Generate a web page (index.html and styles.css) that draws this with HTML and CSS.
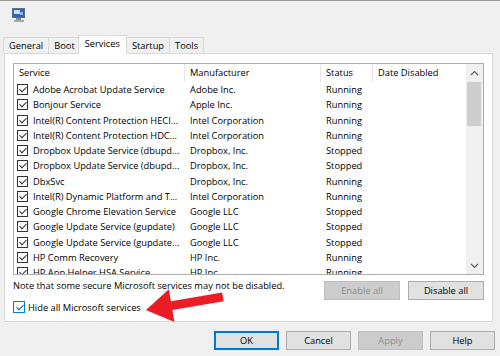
FILE: index.html
```html
<!DOCTYPE html>
<html lang="en">
<head>
    <meta charset="UTF-8">
    <title>System Configuration</title>
    <link rel="stylesheet" href="styles.css">
</head>
<body>
    <div class="window">
        <div class="titlebar">
            <svg class="app-icon" width="14" height="14" viewBox="0 0 14 14">
                <rect x="0.5" y="0.5" width="12" height="9" fill="#2f62b8" stroke="#5a6f8e"/>
                <rect x="2" y="2" width="6" height="4" fill="#bfe0ff"/>
                <rect x="8" y="4" width="3" height="3" fill="#7fb7ee"/>
                <rect x="4" y="10" width="5" height="2" fill="#8c8c8c"/>
                <rect x="2" y="12" width="10" height="2" fill="#a6a6a6"/>
            </svg>
        </div>
        <div class="tabs">
            <div class="tab">General</div>
            <div class="tab">Boot</div>
            <div class="tab active">Services</div>
            <div class="tab">Startup</div>
            <div class="tab">Tools</div>
        </div>
        <div class="panel">
            <div class="list">
                <div class="table">
                    <div class="head">
                        <div class="col">Service</div>
                        <div class="col">Manufacturer</div>
                        <div class="col">Status</div>
                        <div class="col">Date Disabled</div>
                    </div>
                    <div class="row"><div class="svc"><span class="check"></span>Adobe Acrobat Update Service</div><div class="cell">Adobe Inc.</div><div class="cell">Running</div><div class="cell"></div></div>
                    <div class="row"><div class="svc"><span class="check"></span>Bonjour Service</div><div class="cell">Apple Inc.</div><div class="cell">Running</div><div class="cell"></div></div>
                    <div class="row"><div class="svc"><span class="check"></span>Intel(R) Content Protection HECI...</div><div class="cell">Intel Corporation</div><div class="cell">Running</div><div class="cell"></div></div>
                    <div class="row"><div class="svc"><span class="check"></span>Intel(R) Content Protection HDC...</div><div class="cell">Intel Corporation</div><div class="cell">Running</div><div class="cell"></div></div>
                    <div class="row"><div class="svc"><span class="check"></span>Dropbox Update Service (dbupd...</div><div class="cell">Dropbox, Inc.</div><div class="cell">Stopped</div><div class="cell"></div></div>
                    <div class="row"><div class="svc"><span class="check"></span>Dropbox Update Service (dbupd...</div><div class="cell">Dropbox, Inc.</div><div class="cell">Stopped</div><div class="cell"></div></div>
                    <div class="row"><div class="svc"><span class="check"></span>DbxSvc</div><div class="cell">Dropbox, Inc.</div><div class="cell">Running</div><div class="cell"></div></div>
                    <div class="row"><div class="svc"><span class="check"></span>Intel(R) Dynamic Platform and T...</div><div class="cell">Intel Corporation</div><div class="cell">Running</div><div class="cell"></div></div>
                    <div class="row"><div class="svc"><span class="check"></span>Google Chrome Elevation Service</div><div class="cell">Google LLC</div><div class="cell">Stopped</div><div class="cell"></div></div>
                    <div class="row"><div class="svc"><span class="check"></span>Google Update Service (gupdate)</div><div class="cell">Google LLC</div><div class="cell">Stopped</div><div class="cell"></div></div>
                    <div class="row"><div class="svc"><span class="check"></span>Google Update Service (gupdate...</div><div class="cell">Google LLC</div><div class="cell">Stopped</div><div class="cell"></div></div>
                    <div class="row"><div class="svc"><span class="check"></span>HP Comm Recovery</div><div class="cell">HP Inc.</div><div class="cell">Running</div><div class="cell"></div></div>
                    <div class="row"><div class="svc"><span class="check"></span>HP App Helper HSA Service</div><div class="cell">HP Inc.</div><div class="cell">Running</div><div class="cell"></div></div>
                </div>
                <div class="scrollbar">
                    <div class="sb-btn">
                        <svg width="9" height="6" viewBox="0 0 9 6"><polyline points="1,5 4.5,1.5 8,5" fill="none" stroke="#606060" stroke-width="1.2"/></svg>
                    </div>
                    <div class="thumb"></div>
                    <div class="track"></div>
                    <div class="sb-btn">
                        <svg width="9" height="6" viewBox="0 0 9 6"><polyline points="1,1 4.5,4.5 8,1" fill="none" stroke="#606060" stroke-width="1.2"/></svg>
                    </div>
                </div>
            </div>
            <div class="actions">
                <p class="note">Note that some secure Microsoft services may not be disabled.</p>
                <button class="btn" disabled>Enable all</button>
                <button class="btn">Disable all</button>
            </div>
            <label class="hide-row"><span class="check focus"></span>Hide all Microsoft services</label>
            <svg class="pointer" width="90" height="50" viewBox="0 0 90 50">
                <polygon transform="translate(6,30) rotate(-9.7)" points="0,0 26,-16.5 26,-4.5 78,-4.5 78,4.5 26,4.5 26,16.5" fill="#ec1c24"/>
            </svg>
        </div>
        <div class="footer">
            <button class="btn default">OK</button>
            <button class="btn">Cancel</button>
            <button class="btn" disabled>Apply</button>
            <button class="btn">Help</button>
        </div>
    </div>
</body>
</html>
```

FILE: styles.css
```css
* { box-sizing: border-box; }
body {
    margin: 0;
    background: #f0f0f0;
    font-family: "Open Sans", "Noto Sans", sans-serif;
    font-size: 9.3px;
    color: #000;
}
.window {
    width: 500px;
    height: 356px;
    border-top: 1px solid #9a9a9a;
    overflow: hidden;
}
.titlebar {
    height: 34px;
    padding: 7px 0 0 12px;
}
.app-icon { display: block; }

/* tabs */
.tabs {
    display: flex;
    align-items: flex-end;
    padding-left: 3px;
    height: 18px;
}
.tab {
    height: 16px;
    line-height: 15px;
    padding: 0 5px;
    border: 1px solid #d9d9d9;
    border-bottom: none;
    margin-right: -1px;
    background: #f0f0f0;
}
.tab.active {
    height: 19px;
    margin: 0 -1px 0 -2px;
    padding: 0 6px;
    line-height: 16px;
    background: #fff;
    position: relative;
    z-index: 1;
    margin-bottom: -1px;
}
.panel {
    position: relative;
    margin-left: 4px;
    width: 489px;
    background: #fff;
    border: 1px solid #d9d9d9;
    padding: 9px 0 8px 8px;
}

/* service list */
.list {
    display: flex;
    width: 471px;
    height: 212px;
    border: 1px solid #adadad;
    overflow: hidden;
}
.table { flex: 1; overflow: hidden; }
.head, .row {
    display: grid;
    grid-template-columns: 171px 136px 52px 1fr;
}
.head { height: 18px; }
.col {
    line-height: 18px;
    padding-left: 5px;
    border-right: 1px solid #e5e5e5;
}
.col:last-child { border-right: none; }
.row { height: 15.25px; line-height: 15.25px; }
.svc {
    display: flex;
    align-items: center;
    gap: 5px;
    padding-left: 3px;
    white-space: nowrap;
    overflow: hidden;
}
.cell {
    padding-left: 5px;
    white-space: nowrap;
    overflow: hidden;
}
.check {
    position: relative;
    flex: none;
    width: 11px;
    height: 11px;
    border: 1px solid #333;
    background: #fff;
}
.check::after {
    content: "";
    position: absolute;
    left: 3px;
    top: 0;
    width: 3px;
    height: 6px;
    border: solid #333;
    border-width: 0 1px 1px 0;
    transform: rotate(45deg);
}
.check.focus {
    width: 12px;
    height: 12px;
    border-color: #0078d7;
}
.check.focus::after { border-color: #1b5fa8; left: 3.5px; top: 0.5px; }

.scrollbar {
    width: 17px;
    display: flex;
    flex-direction: column;
    background: #f0f0f0;
}
.sb-btn {
    height: 17px;
    display: flex;
    align-items: center;
    justify-content: center;
}
.thumb {
    height: 44px;
    margin: 1px 2px 0 1px;
    background: #cdcdcd;
}
.track { flex: 1; }

/* under the list */
.actions {
    display: flex;
    align-items: flex-start;
    gap: 8px;
    width: 471px;
    margin-top: 6px;
}
.note {
    margin: -1px auto 0 0;
    line-height: 12px;
}
.btn {
    width: 76px;
    height: 19px;
    padding: 0;
    font: inherit;
    color: #000;
    background: #e1e1e1;
    border: 1px solid #adadad;
}
.btn:disabled {
    color: #8d8d8d;
    background: #cccccc;
    border-color: #bfbfbf;
}
.btn.default {
    border-color: #0078d7;
    box-shadow: inset 0 0 0 1px #0078d7;
}
.hide-row {
    display: flex;
    align-items: center;
    gap: 3px;
    margin-top: 1px;
    height: 12px;
}
.pointer {
    position: absolute;
    left: 135px;
    top: 226px;
}
.footer {
    display: flex;
    justify-content: flex-end;
    gap: 7px;
    padding-right: 5px;
    margin-top: 9px;
}
.footer .btn { width: 65px; }
```
